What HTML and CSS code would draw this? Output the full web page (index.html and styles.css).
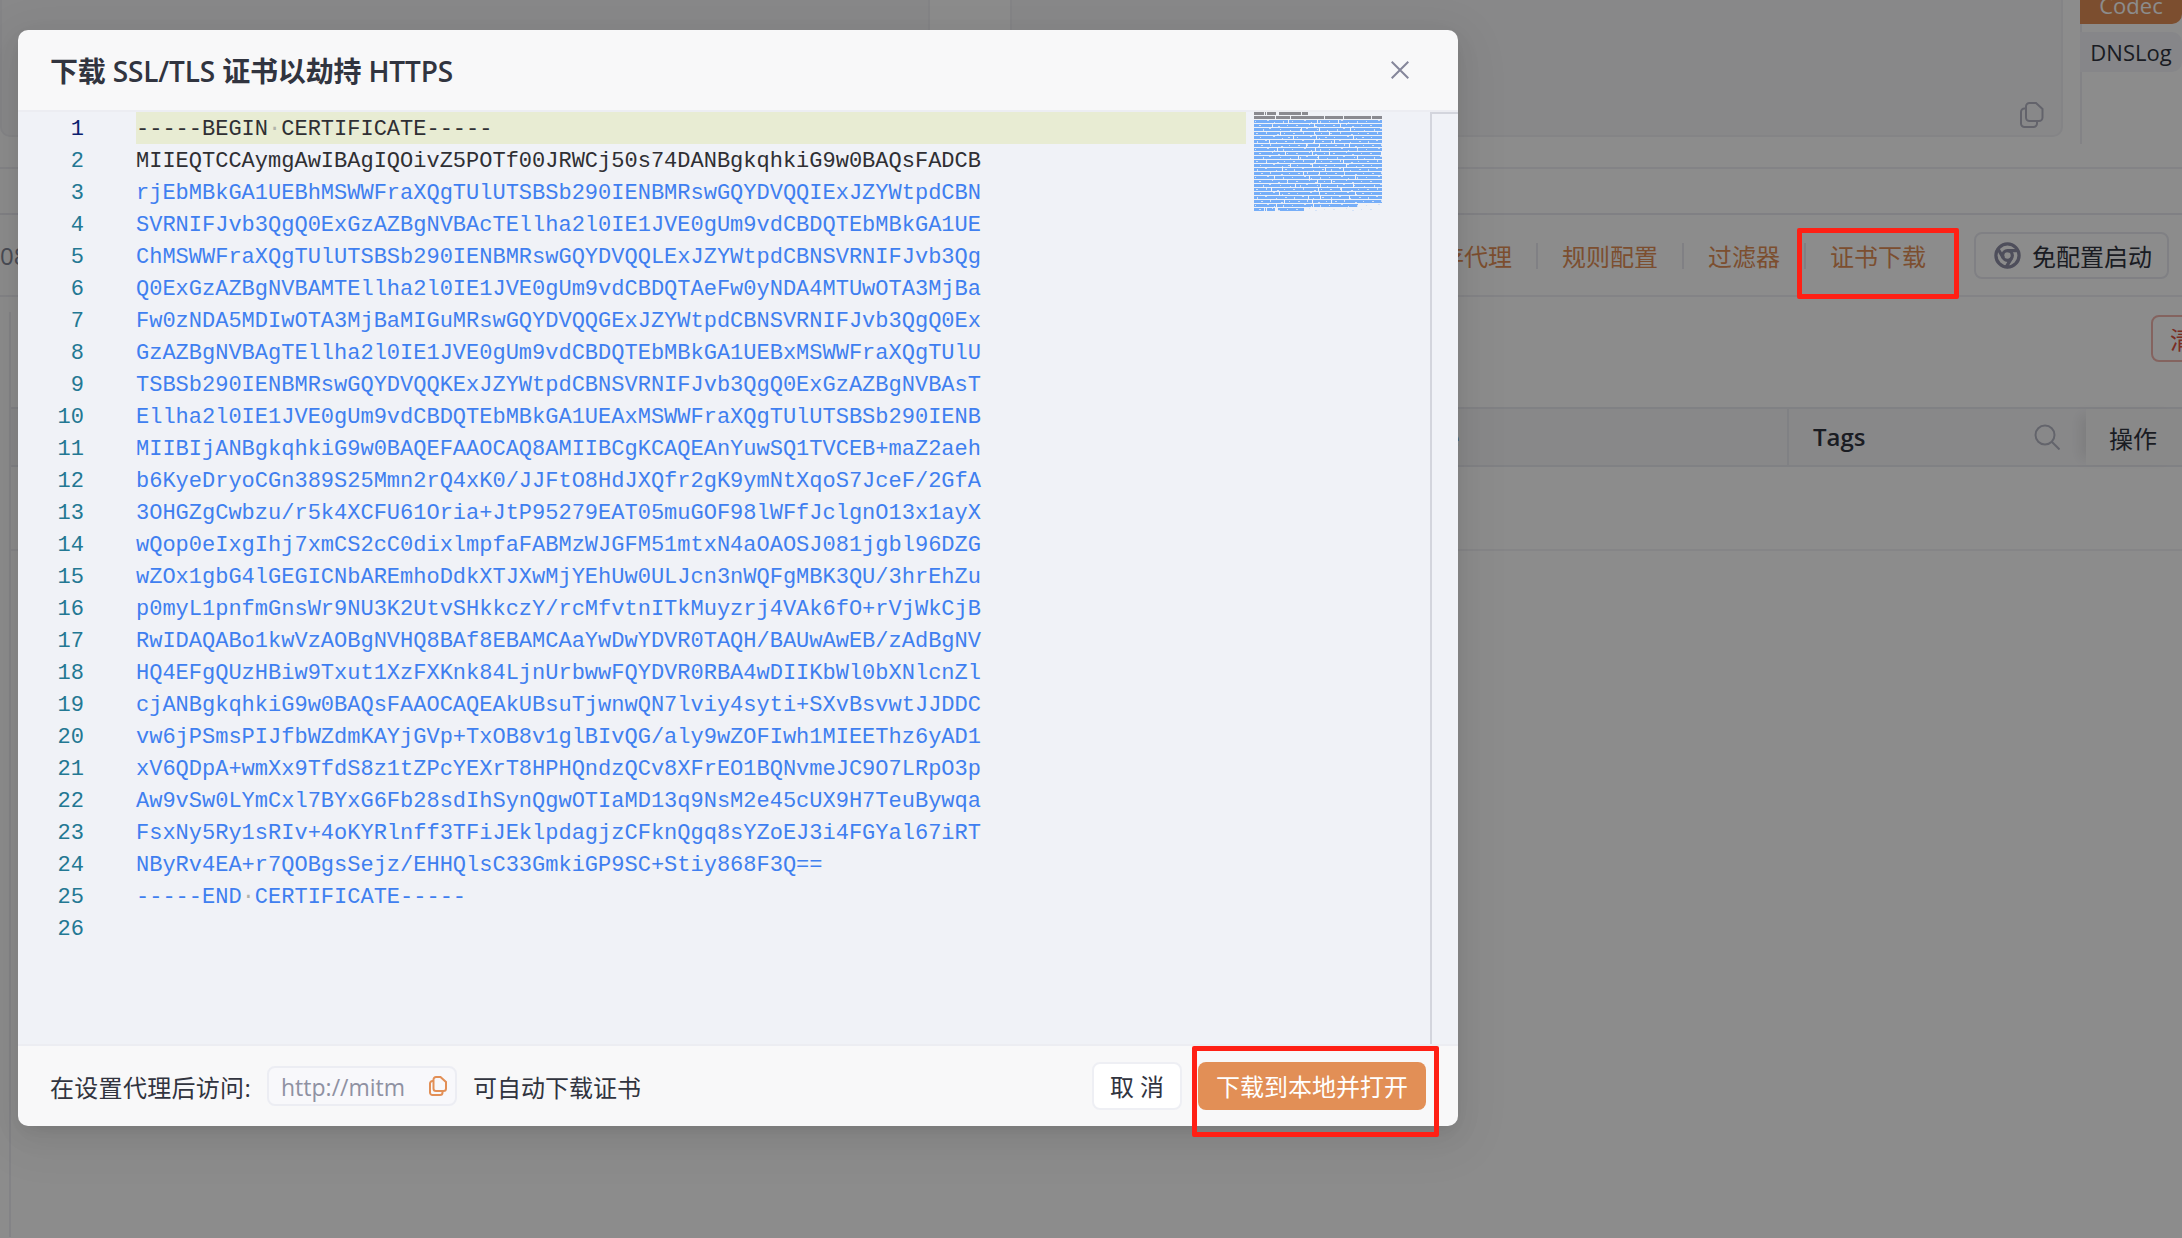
FILE: index.html
```html
<!DOCTYPE html>
<html lang="zh-CN">
<head>
<meta charset="utf-8">
<title>下载 SSL/TLS 证书以劫持 HTTPS</title>
<link rel="stylesheet" href="styles.css">
</head>
<body>
<div class="page">
  <div class="top">
    <div class="panels">
      <div class="panel panel-a"></div>
      <div class="panel panel-b">
        <svg class="copy-gray" viewBox="0 0 24 26" fill="none" stroke="currentColor" stroke-width="2"><path d="M9.500 1h6.500l6.500 6v8.500a3.500 3.500 0 0 1-3.500 3.500h-9.500a3.500 3.500 0 0 1-3.500-3.500v-11a3.500 3.500 0 0 1 3.500-3.500z"/><path d="M6 6.500h-1.500a3.500 3.500 0 0 0-3.500 3.500v11.500a3.500 3.500 0 0 0 3.500 3.500h9a3.500 3.500 0 0 0 3.500-3.500v-2.500"/></svg>
      </div>
    </div>
    <div class="side">
      <div class="side-tab codec"><span>Codec</span></div>
      <div class="side-tab dnslog"><span>DNSLog</span></div>
    </div>
  </div>
  <div class="strip"></div>
  <div class="toolbar">
    <span class="clip-no">08</span>
    <div class="tabs">
      <span class="tab">缓存代理</span><i class="sep"></i>
      <span class="tab">规则配置</span><i class="sep"></i>
      <span class="tab">过滤器</span><i class="sep"></i>
      <span class="tab">证书下载</span>
      <button class="free-btn">
        <svg class="chrome" viewBox="0 0 28 28" fill="none" stroke="currentColor" stroke-width="3.400"><circle cx="14" cy="14" r="12"/><circle cx="14" cy="14" r="5"/><path d="M14 9h11.500M18.300 16.500l-6 10M9.700 16.500l-6-10"/></svg>
        <span>免配置启动</span>
      </button>
    </div>
  </div>
  <div class="lower">
    <div class="rail"></div>
    <div class="content">
      <div class="filter"><button class="clear-btn">清空</button></div>
      <div class="thead">
        <div class="th th-main">Title</div>
        <div class="th th-tags"><span class="tags-label">Tags</span>
          <svg class="search" viewBox="0 0 26 26" fill="none" stroke="currentColor" stroke-width="2"><circle cx="11" cy="11" r="9.500"/><path d="M18 18l7.500 7.500"/></svg>
        </div>
        <div class="th th-op">操作</div>
      </div>
      <div class="trow"></div>
    </div>
  </div>

  <div class="mask"></div>

  <div class="modal">
    <div class="modal-head">
      <h1 class="modal-title">下载 SSL/TLS 证书以劫持 HTTPS</h1>
      <svg class="close" viewBox="0 0 18 18" fill="none" stroke="currentColor" stroke-width="2"><path d="M0.700 0.700l16.600 16.600M17.300 0.700l-16.600 16.600"/></svg>
    </div>
    <div class="editor">
      <div class="lines">
        <div class="line"><span class="ln ln-on">1</span><span class="code code-on dark">-----BEGIN<span class="ws">·</span>CERTIFICATE-----</span></div>
        <div class="line"><span class="ln">2</span><span class="code dark">MIIEQTCCAymgAwIBAgIQOivZ5POTf00JRWCj50s74DANBgkqhkiG9w0BAQsFADCB</span></div>
        <div class="line"><span class="ln">3</span><span class="code">rjEbMBkGA1UEBhMSWWFraXQgTUlUTSBSb290IENBMRswGQYDVQQIExJZYWtpdCBN</span></div>
        <div class="line"><span class="ln">4</span><span class="code">SVRNIFJvb3QgQ0ExGzAZBgNVBAcTEllha2l0IE1JVE0gUm9vdCBDQTEbMBkGA1UE</span></div>
        <div class="line"><span class="ln">5</span><span class="code">ChMSWWFraXQgTUlUTSBSb290IENBMRswGQYDVQQLExJZYWtpdCBNSVRNIFJvb3Qg</span></div>
        <div class="line"><span class="ln">6</span><span class="code">Q0ExGzAZBgNVBAMTEllha2l0IE1JVE0gUm9vdCBDQTAeFw0yNDA4MTUwOTA3MjBa</span></div>
        <div class="line"><span class="ln">7</span><span class="code">Fw0zNDA5MDIwOTA3MjBaMIGuMRswGQYDVQQGExJZYWtpdCBNSVRNIFJvb3QgQ0Ex</span></div>
        <div class="line"><span class="ln">8</span><span class="code">GzAZBgNVBAgTEllha2l0IE1JVE0gUm9vdCBDQTEbMBkGA1UEBxMSWWFraXQgTUlU</span></div>
        <div class="line"><span class="ln">9</span><span class="code">TSBSb290IENBMRswGQYDVQQKExJZYWtpdCBNSVRNIFJvb3QgQ0ExGzAZBgNVBAsT</span></div>
        <div class="line"><span class="ln">10</span><span class="code">Ellha2l0IE1JVE0gUm9vdCBDQTEbMBkGA1UEAxMSWWFraXQgTUlUTSBSb290IENB</span></div>
        <div class="line"><span class="ln">11</span><span class="code">MIIBIjANBgkqhkiG9w0BAQEFAAOCAQ8AMIIBCgKCAQEAnYuwSQ1TVCEB+maZ2aeh</span></div>
        <div class="line"><span class="ln">12</span><span class="code">b6KyeDryoCGn389S25Mmn2rQ4xK0/JJFtO8HdJXQfr2gK9ymNtXqoS7JceF/2GfA</span></div>
        <div class="line"><span class="ln">13</span><span class="code">3OHGZgCwbzu/r5k4XCFU61Oria+JtP95279EAT05muGOF98lWFfJclgnO13x1ayX</span></div>
        <div class="line"><span class="ln">14</span><span class="code">wQop0eIxgIhj7xmCS2cC0dixlmpfaFABMzWJGFM51mtxN4aOAOSJ081jgbl96DZG</span></div>
        <div class="line"><span class="ln">15</span><span class="code">wZOx1gbG4lGEGICNbAREmhoDdkXTJXwMjYEhUw0ULJcn3nWQFgMBK3QU/3hrEhZu</span></div>
        <div class="line"><span class="ln">16</span><span class="code">p0myL1pnfmGnsWr9NU3K2UtvSHkkczY/rcMfvtnITkMuyzrj4VAk6fO+rVjWkCjB</span></div>
        <div class="line"><span class="ln">17</span><span class="code">RwIDAQABo1kwVzAOBgNVHQ8BAf8EBAMCAaYwDwYDVR0TAQH/BAUwAwEB/zAdBgNV</span></div>
        <div class="line"><span class="ln">18</span><span class="code">HQ4EFgQUzHBiw9Txut1XzFXKnk84LjnUrbwwFQYDVR0RBA4wDIIKbWl0bXNlcnZl</span></div>
        <div class="line"><span class="ln">19</span><span class="code">cjANBgkqhkiG9w0BAQsFAAOCAQEAkUBsuTjwnwQN7lviy4syti+SXvBsvwtJJDDC</span></div>
        <div class="line"><span class="ln">20</span><span class="code">vw6jPSmsPIJfbWZdmKAYjGVp+TxOB8v1glBIvQG/aly9wZOFIwh1MIEEThz6yAD1</span></div>
        <div class="line"><span class="ln">21</span><span class="code">xV6QDpA+wmXx9TfdS8z1tZPcYEXrT8HPHQndzQCv8XFrEO1BQNvmeJC9O7LRpO3p</span></div>
        <div class="line"><span class="ln">22</span><span class="code">Aw9vSw0LYmCxl7BYxG6Fb28sdIhSynQgwOTIaMD13q9NsM2e45cUX9H7TeuBywqa</span></div>
        <div class="line"><span class="ln">23</span><span class="code">FsxNy5Ry1sRIv+4oKYRlnff3TFiJEklpdagjzCFknQgq8sYZoEJ3i4FGYal67iRT</span></div>
        <div class="line"><span class="ln">24</span><span class="code">NByRv4EA+r7QOBgsSejz/EHHQlsC33GmkiGP9SC+Stiy868F3Q==</span></div>
        <div class="line"><span class="ln">25</span><span class="code">-----END<span class="ws">·</span>CERTIFICATE-----</span></div>
        <div class="line"><span class="ln">26</span><span class="code"></span></div>
      </div>
      <svg class="minimap" width="128" height="100" viewBox="0 0 128 100" fill="none" stroke-width="3">
        <defs>
          <pattern id="noise" width="37" height="28" patternUnits="userSpaceOnUse">
            <g fill="#d3e2f8">
              <rect x="3" y="1" width="1" height="2"/><rect x="11" y="0" width="2" height="1"/><rect x="22" y="2" width="1" height="1"/><rect x="31" y="1" width="2" height="1"/>
              <rect x="7" y="5" width="2" height="1"/><rect x="16" y="4" width="1" height="2"/><rect x="27" y="6" width="2" height="1"/><rect x="35" y="5" width="1" height="1"/>
              <rect x="1" y="9" width="1" height="1"/><rect x="13" y="8" width="2" height="1"/><rect x="20" y="10" width="1" height="1"/><rect x="29" y="9" width="1" height="2"/>
              <rect x="5" y="13" width="2" height="1"/><rect x="18" y="12" width="1" height="1"/><rect x="24" y="14" width="2" height="1"/><rect x="33" y="13" width="1" height="1"/>
              <rect x="9" y="17" width="1" height="2"/><rect x="15" y="16" width="2" height="1"/><rect x="26" y="17" width="1" height="1"/><rect x="36" y="18" width="1" height="1"/>
              <rect x="2" y="21" width="2" height="1"/><rect x="12" y="20" width="1" height="2"/><rect x="23" y="22" width="2" height="1"/><rect x="30" y="21" width="1" height="1"/>
              <rect x="6" y="25" width="1" height="1"/><rect x="19" y="24" width="2" height="1"/><rect x="28" y="26" width="1" height="1"/><rect x="34" y="25" width="2" height="1"/>
            </g>
          </pattern>
        </defs>
        <g stroke="#8a8a90">
          <path d="M0 1.500h54" stroke-dasharray="10 1 1 1 9 3 22 1 7"/>
          <path d="M0 5.500h128" stroke-dasharray="21 1 14 1 33 1 18 1 27 1 10"/>
        </g>
        <g stroke="#76aef8">
          <path d="M0 9.500h128" stroke-dasharray="34 1 28 1 20 1 43"/>
          <path d="M0 13.500h128" stroke-dasharray="18 1 41 1 25 1 41"/>
          <path d="M0 17.500h128" stroke-dasharray="47 1 17 1 30 1 31"/>
          <path d="M0 21.500h128" stroke-dasharray="26 1 33 1 14 1 52"/>
          <path d="M0 25.500h128" stroke-dasharray="39 1 22 1 36 1 28"/>
          <path d="M0 29.500h128" stroke-dasharray="15 1 44 1 19 1 47"/>
          <path d="M0 33.500h128" stroke-dasharray="52 1 12 1 29 1 32"/>
          <path d="M0 37.500h128" stroke-dasharray="23 1 37 1 41 1 24"/>
          <path d="M0 41.500h128" stroke-dasharray="31 1 26 1 16 1 51"/>
          <path d="M0 45.500h128" stroke-dasharray="44 1 19 1 38 1 24"/>
          <path d="M0 49.500h128" stroke-dasharray="12 1 48 1 27 1 38"/>
          <path d="M0 53.500h128" stroke-dasharray="36 1 21 1 33 1 35"/>
          <path d="M0 57.500h128" stroke-dasharray="28 1 42 1 17 1 38"/>
          <path d="M0 61.500h128" stroke-dasharray="49 1 15 1 24 1 37"/>
          <path d="M0 65.500h128" stroke-dasharray="20 1 34 1 45 1 26"/>
          <path d="M0 69.500h128" stroke-dasharray="33 1 29 1 13 1 50"/>
          <path d="M0 73.500h128" stroke-dasharray="41 1 24 1 32 1 28"/>
          <path d="M0 77.500h128" stroke-dasharray="17 1 46 1 22 1 40"/>
          <path d="M0 81.500h128" stroke-dasharray="25 1 39 1 35 1 26"/>
          <path d="M0 85.500h128" stroke-dasharray="54 1 11 1 28 1 32"/>
          <path d="M0 89.500h128" stroke-dasharray="30 1 27 1 18 1 50"/>
          <path d="M0 93.500h104" stroke-dasharray="22 1 36 1 44"/>
          <path d="M0 97.500h50" stroke-dasharray="10 1 1 1 8 3 26"/>
        </g>
        <rect x="0" y="8" width="128" height="92" fill="url(#noise)"/>
      </svg>
      <div class="ruler"></div>
    </div>
    <div class="modal-foot">
      <div class="foot-left">
        <span class="foot-label">在设置代理后访问:</span>
        <div class="url-box"><span class="url-text">http://mitm</span>
          <svg class="copy-orange" viewBox="0 0 18 20" fill="none" stroke="currentColor" stroke-width="2"><path d="M7 1h4.500l5.500 5v6.500a2.500 2.500 0 0 1-2.500 2.500h-7.500a2.500 2.500 0 0 1-2.500-2.500v-9a2.500 2.500 0 0 1 2.500-2.500z"/><path d="M4.500 5h-1a2.500 2.500 0 0 0-2.500 2.500v9a2.500 2.500 0 0 0 2.500 2.500h7.500a2.500 2.500 0 0 0 2.500-2.500v-1"/></svg>
        </div>
        <span>可自动下载证书</span>
      </div>
      <div class="foot-right">
        <button class="btn-cancel">取 消</button>
        <button class="btn-primary">下载到本地并打开</button>
      </div>
    </div>
  </div>

  <div class="mark mark-tab"></div>
  <div class="mark mark-btn"></div>
</div>
</body>
</html>
```
FILE: styles.css
```css
* { box-sizing: border-box; }
html, body { margin: 0; padding: 0; }
body { font-family: "Open Sans", "Noto Sans CJK SC", sans-serif; font-size: 24px; color: #31343f; }
button { font: inherit; cursor: pointer; }

.page { position: relative; width: 2182px; height: 1238px; overflow: hidden; background: #fff; }

/* page behind the dialog */
.top { display: flex; height: 169px; border-bottom: 2px solid #eeeff4; }
.panels { display: flex; width: 2080px; height: 137px; padding-right: 17px; }
.panel { background: #f8f8fa; border: 2px solid #f0f1f5; border-top: 0; border-radius: 0 0 10px 10px; }
.panel-a { width: 930px; }
.panel-b { flex: 1; margin-left: 80px; display: flex; justify-content: flex-end; align-items: flex-end; padding: 0 17px 7px 0; }
.copy-gray { width: 24px; height: 26px; color: #b4b5c4; }
.side { width: 102px; height: 144px; border-left: 2px solid #eeeff4; display: flex; flex-direction: column; gap: 8px; }
.side-tab { display: flex; justify-content: center; margin-left: -2px; font-size: 22px; border-radius: 0 10px 10px 0; }
.codec { height: 24px; align-items: flex-end; overflow: hidden; padding-bottom: 7px; background: #e28f56; color: #fff; line-height: 24px; border-radius: 0 0 10px 0; }
.dnslog { height: 40px; align-items: center; background: #f4f5f9; }

.strip { height: 46px; border-bottom: 2px solid #e9eaf0; }

.toolbar { display: flex; align-items: center; justify-content: space-between; height: 82px; border-bottom: 2px solid #eeeff4; padding: 0 13px 0 0; }
.clip-no { color: #85899a; }
.tabs { display: flex; align-items: center; }
.tab { padding: 4px 24px 0; color: #e28f56; line-height: 32px; }
.sep { width: 2px; height: 26px; margin-top: 2px; background: #e9eaf0; }
.free-btn { display: flex; align-items: center; gap: 11px; width: 195px; height: 47px; margin-left: 24px; padding: 0 0 0 18px; background: #fff; border: 2px solid #e9eaf0; border-radius: 8px; color: #31343f; }
.chrome { width: 27px; height: 27px; color: #8f8fa6; flex: none; }

.lower { display: flex; height: 940px; }
.rail { width: 11px; margin-top: 15px; border-right: 2px solid #eeeff4; }
.content { flex: 1; min-width: 0; }
.filter { display: flex; justify-content: flex-end; height: 110px; padding-top: 18px; }
.clear-btn { width: 100px; height: 47px; margin-right: -69px; padding: 0 0 0 17px; text-align: left; color: #e0533f; background: #fff; border: 2px solid #f0b5ad; border-radius: 8px; }
.thead { display: flex; height: 60px; background: #f8f8fa; border-top: 2px solid #eaebf0; border-bottom: 2px solid #eaebf0; }
.th { display: flex; align-items: center; }
.th-main { width: 1778px; padding-left: 1398px; border-right: 2px solid #eaebf0; font-weight: 600; }
.th-tags { width: 297px; padding: 0 26px 0 24px; justify-content: space-between; font-weight: 600; }
.tags-label { margin-top: -2px; }
.search { width: 26px; height: 26px; color: #b4b6c4; }
.th-op { flex: 1; padding-left: 23px; background: #fafafa; box-shadow: -12px 0 12px -6px rgba(0, 0, 0, .08); font-weight: 400; }
.trow { height: 84px; border-bottom: 2px solid #f2f3f6; }

.mask { position: absolute; inset: 0; background: rgba(0, 0, 0, .45); }

/* dialog */
.modal { position: absolute; left: 18px; top: 30px; display: flex; flex-direction: column; width: 1440px; height: 1096px; overflow: hidden; border-radius: 10px; background: #f8f8f9; box-shadow: 0 6px 16px -8px rgba(0, 0, 0, .1), 0 9px 28px 0 rgba(0, 0, 0, .06), 0 12px 48px 16px rgba(0, 0, 0, .04); }
.modal-head { display: flex; align-items: center; justify-content: space-between; height: 80px; padding: 2px 49px 0 32px; }
.modal-title { margin: 0; font-size: 28px; font-weight: 600; line-height: 36px; letter-spacing: -.16px; color: #31343f; }
.close { width: 18px; height: 18px; margin-top: -2px; color: #85869a; }

.editor { display: flex; height: 936px; background: #f0f2f7; border-top: 2px solid #ecedf2; border-bottom: 2px solid #ecedf2; }
.lines { width: 1228px; }
.line { display: flex; height: 32px; font-family: "Liberation Mono", monospace; font-size: 22px; line-height: 32px; white-space: pre; }
.ln { width: 66px; padding-top: 2px; text-align: right; color: #237893; }
.ln-on { color: #0b216f; }
.code { flex: 1; margin-left: 52px; padding-top: 2px; color: #3f7ff0; }
.code-on { background: #e8ecd3; }
.dark { color: #2f2f33; }
.ws { color: #b0b3aa; }
.minimap { margin-left: 8px; flex: none; }
.ruler { width: 28px; height: 932px; margin-left: 48px; border-left: 2px solid #d3d5dd; border-top: 2px solid #d3d5dd; }

.modal-foot { display: flex; align-items: center; justify-content: space-between; flex: 1; padding: 0 32px; }
.foot-left { display: flex; align-items: center; gap: 16px; color: #31343f; }
.foot-left > span { padding-top: 1px; }
.foot-label { letter-spacing: .3px; }
.url-box { display: flex; align-items: center; justify-content: space-between; width: 190px; height: 40px; padding: 0 8px 0 12px; background: #f8f8fb; border: 2px solid #ecedf3; border-radius: 8px; }
.url-text { padding-top: 1px; color: #8f91a2; font-size: 23px; }
.copy-orange { width: 18px; height: 20px; color: #e28f56; }
.foot-right { display: flex; align-items: center; gap: 16px; }
.btn-cancel { width: 90px; height: 48px; padding: 0 0 2px; background: #fff; border: 2px solid #eeeff4; border-radius: 8px; color: #31343f; }
.btn-primary { width: 228px; height: 48px; padding: 0 0 2px; background: #e28f56; border: 0; border-radius: 8px; color: #fff; }

/* red annotation boxes drawn on the screenshot */
.mark { position: absolute; border: 5px solid #ff2015; border-radius: 2px; }
.mark-tab { left: 1797px; top: 228px; width: 162px; height: 71px; }
.mark-btn { left: 1192px; top: 1046px; width: 247px; height: 91px; }
```
